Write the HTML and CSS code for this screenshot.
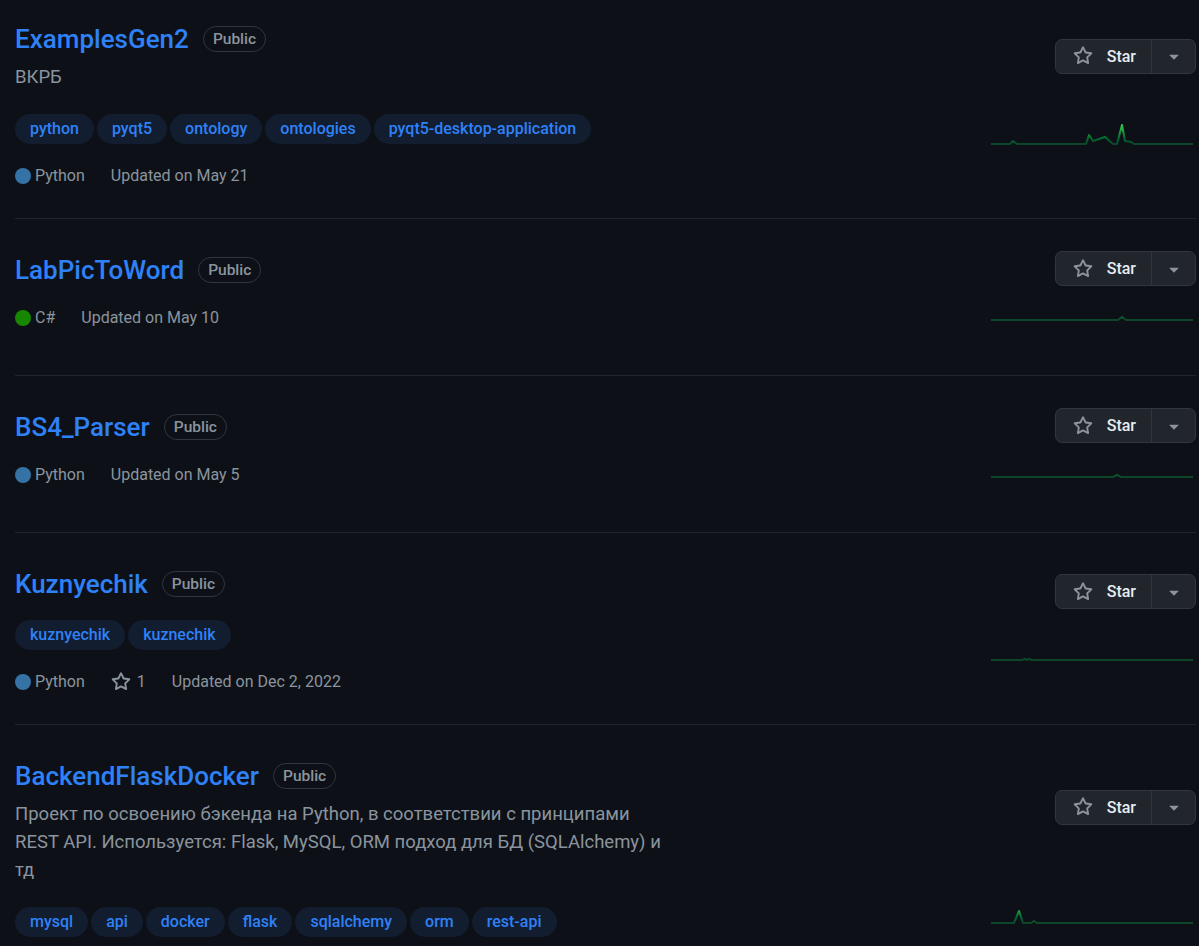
FILE: index.html
```html
<!DOCTYPE html>
<html lang="ru">
<head>
    <meta charset="UTF-8">
    <meta name="viewport" content="width=device-width, initial-scale=1.0">
    <title>Repositories</title>
    <link rel="stylesheet" href="styles.css">
</head>
<body>
    <svg width="0" height="0" class="defs">
        <defs>
            <linearGradient id="spark-grad" x1="0" y1="25" x2="0" y2="4" gradientUnits="userSpaceOnUse">
                <stop offset="0%" stop-color="#0e4429"></stop>
                <stop offset="30%" stop-color="#006d32"></stop>
                <stop offset="65%" stop-color="#26a641"></stop>
                <stop offset="100%" stop-color="#39d353"></stop>
            </linearGradient>
            <symbol id="star" viewBox="0 0 16 16">
                <path d="M8 .25a.75.75 0 0 1 .673.418l1.882 3.815 4.21.612a.75.75 0 0 1 .416 1.279l-3.046 2.970.719 4.192a.751.751 0 0 1-1.088.791L8 12.347l-3.766 1.980a.75.75 0 0 1-1.088-.79l.72-4.194L.818 6.374a.75.75 0 0 1 .416-1.28l4.21-.611L7.327.668A.75.75 0 0 1 8 .25Zm0 2.445L6.615 5.5a.75.75 0 0 1-.564.41l-3.097.45 2.24 2.184a.75.75 0 0 1 .216.664l-.528 3.084 2.769-1.456a.75.75 0 0 1 .698 0l2.77 1.456-.53-3.084a.75.75 0 0 1 .216-.664l2.24-2.183-3.096-.45a.75.75 0 0 1-.564-.41L8 2.694Z"></path>
            </symbol>
            <symbol id="caret" viewBox="0 0 16 16">
                <path d="m4.427 7.427 3.396 3.396a.25.25 0 0 0 .354 0l3.396-3.396A.25.25 0 0 0 11.396 7H4.604a.25.25 0 0 0-.177.427Z"></path>
            </symbol>
        </defs>
    </svg>

    <ul class="repo-list">
        <li class="repo">
            <div class="repo-main">
                <div class="repo-head">
                    <a class="repo-name" href="#">ExamplesGen2</a>
                    <span class="label">Public</span>
                </div>
                <p class="repo-desc">ВКРБ</p>
                <div class="topics">
                    <a class="topic" href="#">python</a>
                    <a class="topic" href="#">pyqt5</a>
                    <a class="topic" href="#">ontology</a>
                    <a class="topic" href="#">ontologies</a>
                    <a class="topic" href="#">pyqt5-desktop-application</a>
                </div>
                <div class="repo-meta">
                    <span class="meta-item"><span class="lang-dot python"></span>Python</span>
                    <span class="meta-item">Updated on May 21</span>
                </div>
            </div>
            <div class="repo-side">
                <div class="star-btn">
                    <button class="star-main"><svg class="ico"><use href="#star"></use></svg>Star</button>
                    <button class="star-drop"><svg class="caret"><use href="#caret"></use></svg></button>
                </div>
                <svg class="spark" viewBox="0 0 202 48">
                    <polyline points="0,25 19,25 22,22 26,25 95,25 98,16 102,22 114,18 122,25 126,25 131,6 134,22 140,23 143,25 202,25"></polyline>
                </svg>
            </div>
        </li>

        <li class="repo">
            <div class="repo-main">
                <div class="repo-head">
                    <a class="repo-name" href="#">LabPicToWord</a>
                    <span class="label">Public</span>
                </div>
                <div class="repo-meta">
                    <span class="meta-item"><span class="lang-dot csharp"></span>C#</span>
                    <span class="meta-item">Updated on May 10</span>
                </div>
            </div>
            <div class="repo-side">
                <div class="star-btn">
                    <button class="star-main"><svg class="ico"><use href="#star"></use></svg>Star</button>
                    <button class="star-drop"><svg class="caret"><use href="#caret"></use></svg></button>
                </div>
                <svg class="spark" viewBox="0 0 202 48">
                    <polyline points="0,25 127,25 131,22 135,25 202,25"></polyline>
                </svg>
            </div>
        </li>

        <li class="repo">
            <div class="repo-main">
                <div class="repo-head">
                    <a class="repo-name" href="#">BS4_Parser</a>
                    <span class="label">Public</span>
                </div>
                <div class="repo-meta">
                    <span class="meta-item"><span class="lang-dot python"></span>Python</span>
                    <span class="meta-item">Updated on May 5</span>
                </div>
            </div>
            <div class="repo-side">
                <div class="star-btn">
                    <button class="star-main"><svg class="ico"><use href="#star"></use></svg>Star</button>
                    <button class="star-drop"><svg class="caret"><use href="#caret"></use></svg></button>
                </div>
                <svg class="spark" viewBox="0 0 202 48">
                    <polyline points="0,25 122,25 126,23 130,25 202,25"></polyline>
                </svg>
            </div>
        </li>

        <li class="repo">
            <div class="repo-main">
                <div class="repo-head">
                    <a class="repo-name" href="#">Kuznyechik</a>
                    <span class="label">Public</span>
                </div>
                <div class="topics">
                    <a class="topic" href="#">kuznyechik</a>
                    <a class="topic" href="#">kuznechik</a>
                </div>
                <div class="repo-meta">
                    <span class="meta-item"><span class="lang-dot python"></span>Python</span>
                    <span class="meta-item"><svg class="ico meta-star"><use href="#star"></use></svg>1</span>
                    <span class="meta-item">Updated on Dec 2, 2022</span>
                </div>
            </div>
            <div class="repo-side">
                <div class="star-btn">
                    <button class="star-main"><svg class="ico"><use href="#star"></use></svg>Star</button>
                    <button class="star-drop"><svg class="caret"><use href="#caret"></use></svg></button>
                </div>
                <svg class="spark" viewBox="0 0 202 48">
                    <polyline points="0,25 31,25 34,24 36,25 38,24 41,25 202,25"></polyline>
                </svg>
            </div>
        </li>

        <li class="repo">
            <div class="repo-main">
                <div class="repo-head">
                    <a class="repo-name" href="#">BackendFlaskDocker</a>
                    <span class="label">Public</span>
                </div>
                <p class="repo-desc">Проект по освоению бэкенда на Python, в соответствии с принципами REST API. Используется: Flask, MySQL, ORM подход для БД (SQLAlchemy) и тд</p>
                <div class="topics">
                    <a class="topic" href="#">mysql</a>
                    <a class="topic" href="#">api</a>
                    <a class="topic" href="#">docker</a>
                    <a class="topic" href="#">flask</a>
                    <a class="topic" href="#">sqlalchemy</a>
                    <a class="topic" href="#">orm</a>
                    <a class="topic" href="#">rest-api</a>
                </div>
                <div class="repo-meta">
                    <span class="meta-item"><span class="lang-dot python"></span>Python</span>
                    <span class="meta-item">Updated on Nov 14, 2022</span>
                </div>
            </div>
            <div class="repo-side">
                <div class="star-btn">
                    <button class="star-main"><svg class="ico"><use href="#star"></use></svg>Star</button>
                    <button class="star-drop"><svg class="caret"><use href="#caret"></use></svg></button>
                </div>
                <svg class="spark" viewBox="0 0 202 48">
                    <polyline points="0,25 23,25 28,13 32,25 40,25 43,23 46,25 202,25"></polyline>
                </svg>
            </div>
        </li>
    </ul>
</body>
</html>
```

FILE: styles.css
```css
body {
    margin: 0;
    padding: 0 3px 0 15px;
    background-color: #0d1117;
    color: #e6edf3;
    font-family: Roboto, 'Noto Sans', 'Liberation Sans', sans-serif;
    font-size: 16px;
}
.defs {
    position: absolute;
}
.repo-list {
    list-style: none;
    margin: -13px 0 0;
    padding: 0;
}
.repo {
    display: flex;
    min-height: 100px;
    border-top: 1px solid #21262d;
    padding: 28px 0;
}
.repo-main {
    flex: 1;
    padding: 3px 0 2px;
}
.repo-head {
    display: flex;
    align-items: center;
    height: 40px;
    margin-bottom: 4px;
}
.repo-name {
    color: #2f81f7;
    font-size: 26px;
    font-weight: 500;
    text-decoration: none;
}
.label {
    margin-left: 14px;
    padding: 0 9px;
    border: 1px solid #30363d;
    border-radius: 2em;
    line-height: 24px;
    font-size: 15.5px;
    font-weight: 500;
    color: #8b949e;
}
.repo-desc {
    max-width: 660px;
    margin: 0 0 11px;
    font-size: 18.5px;
    line-height: 28px;
    color: #8b949e;
}
.topics {
    display: flex;
    flex-wrap: wrap;
    gap: 3px;
    padding: 12px 0 10px;
}
.topic {
    padding: 0 15px;
    border-radius: 2em;
    background-color: #121d2f;
    color: #2f81f7;
    font-size: 16px;
    font-weight: 500;
    line-height: 30px;
    text-decoration: none;
}
.repo-meta {
    display: flex;
    align-items: center;
    margin-top: 10px;
    line-height: 24px;
    color: #8b949e;
}
.repo-head + .repo-meta {
    margin-top: 16px;
}
.meta-item {
    display: flex;
    align-items: center;
    margin-right: 26px;
}
.lang-dot {
    width: 16px;
    height: 16px;
    margin-right: 4px;
    border-radius: 50%;
}
.lang-dot.python {
    background-color: #3572a5;
}
.lang-dot.csharp {
    background-color: #178600;
}
.ico {
    width: 20px;
    height: 20px;
    fill: #8b949e;
}
.meta-star {
    margin-right: 6px;
}
.repo-side {
    display: flex;
    flex-direction: column;
    justify-content: space-around;
    align-items: flex-end;
    width: 205px;
}
.star-btn {
    display: flex;
    height: 35px;
    border: 1px solid #30363d;
    border-radius: 7px;
    background-color: #21262d;
    box-sizing: border-box;
    overflow: hidden;
}
.star-btn button {
    display: flex;
    align-items: center;
    border: none;
    background: none;
    color: #e6edf3;
    font-family: inherit;
    font-size: 16px;
    font-weight: 500;
    cursor: pointer;
}
.star-main {
    gap: 14px;
    padding: 0 15px 0 17px;
    border-right: 1px solid #30363d !important;
}
.star-drop {
    justify-content: center;
    width: 43px;
    padding: 0;
}
.caret {
    width: 20px;
    height: 20px;
    fill: #8b949e;
}
.spark {
    width: 202px;
    height: 48px;
    margin-right: 3px;
}
.spark polyline {
    fill: none;
    stroke: url(#spark-grad);
    stroke-width: 2;
    stroke-linejoin: round;
    stroke-linecap: round;
}
```
